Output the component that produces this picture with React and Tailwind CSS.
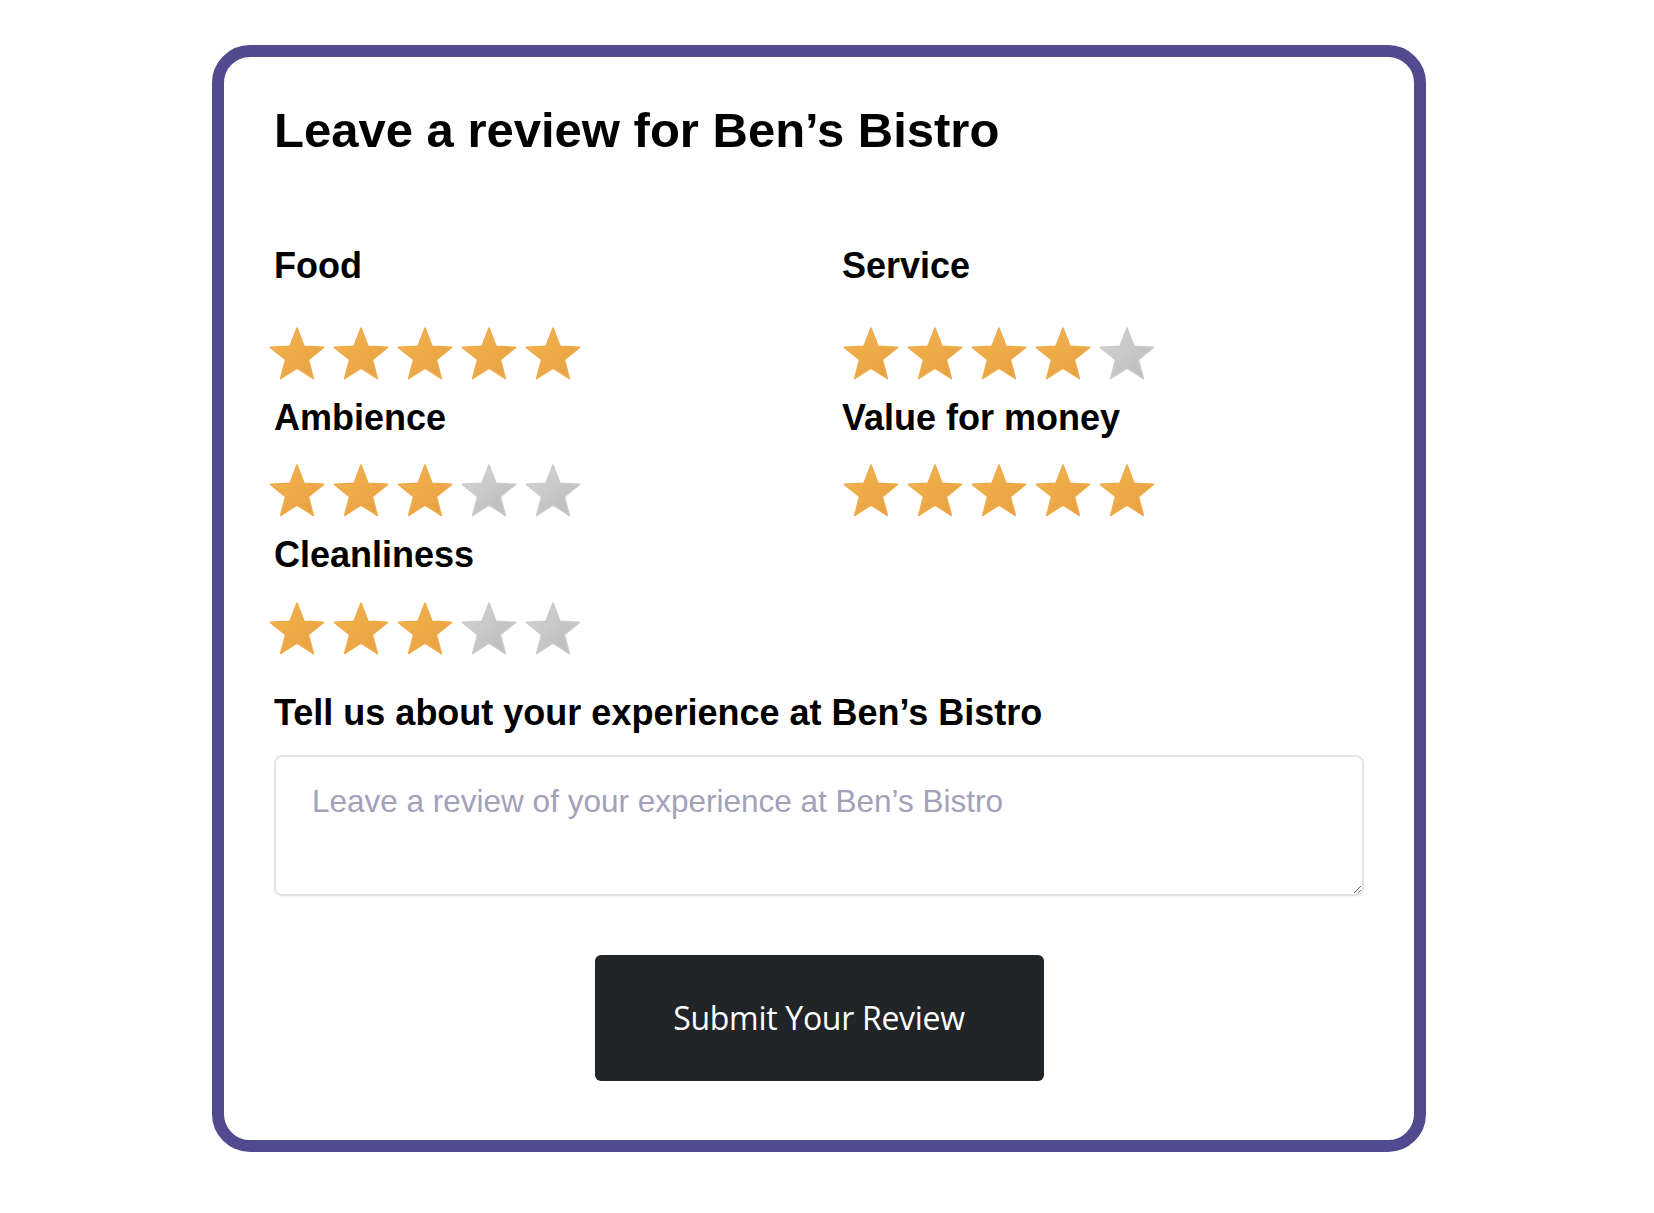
import React from "react";

const STAR = "28,1 35.05,19.29 54.63,20.35 39.41,32.71 44.46,51.65 28,41 11.54,51.65 16.59,32.71 1.37,20.35 20.95,19.29";

const Star = ({ on }) => (
  <svg width="56" height="54" viewBox="0 0 56 54" className="shrink-0">
    <defs>
      <linearGradient id="gold" x1="0" y1="0" x2="1" y2="1">
        <stop offset="0" stopColor="#f4b650" />
        <stop offset="1" stopColor="#e69e3f" />
      </linearGradient>
      <linearGradient id="grey" x1="0" y1="0" x2="1" y2="1">
        <stop offset="0" stopColor="#d6d6d6" />
        <stop offset="1" stopColor="#b9b9b9" />
      </linearGradient>
    </defs>
    <polygon
      points={STAR}
      fill={on ? "url(#gold)" : "url(#grey)"}
      stroke={on ? "#eeaa48" : "#cacaca"}
      strokeWidth="1.5"
      strokeLinejoin="round"
    />
  </svg>
);

const Stars = ({ value, className }) => (
  <div className={"flex gap-[8px] " + className}>
    {[1, 2, 3, 4, 5].map((n) => (
      <Star key={n} on={n <= value} />
    ))}
  </div>
);

const Label = ({ children, className = "" }) => (
  <div className={"text-[36px] leading-[36px] font-bold text-black " + className}>{children}</div>
);

const App = () => {
  return (
    <div
      className="min-h-screen bg-white pt-[45px] pb-[61px]"
      style={{ fontFamily: '"Liberation Sans", Arial, sans-serif' }}
    >
      <div className="ml-[212px] w-[1214px] rounded-[38px] border-[12px] border-[#514a8e] bg-white pt-[49px] pb-[59px] pl-[50px] pr-[50px]">
        <h1 className="text-[49px] leading-[49px] font-bold text-black">Leave a review for Ben’s Bistro</h1>

        <div className="grid grid-cols-[568px_1fr] mt-[93px]">
          <div>
            <Label>Food</Label>
            <Stars value={5} className="mt-[43px] -ml-[5px]" />
          </div>
          <div>
            <Label>Service</Label>
            <Stars value={4} className="mt-[43px] ml-[1px]" />
          </div>
          <div className="mt-[19px]">
            <Label>Ambience</Label>
            <Stars value={3} className="mt-[28px] -ml-[5px]" />
          </div>
          <div className="mt-[19px]">
            <Label>Value for money</Label>
            <Stars value={5} className="mt-[28px] ml-[1px]" />
          </div>
          <div className="mt-[19px]">
            <Label>Cleanliness</Label>
            <Stars value={3} className="mt-[29px] -ml-[5px]" />
          </div>
        </div>

        <Label className="mt-[39px]">Tell us about your experience at Ben’s Bistro</Label>

        <textarea
          placeholder="Leave a review of your experience at Ben’s Bistro"
          className="mt-[24px] block w-full h-[141px] rounded-[8px] border-2 border-[#e3e3e6] pl-[36px] pr-[20px] pt-[26px] text-[31.5px] leading-[36px] text-[#333] placeholder:text-[#a3a1ba] outline-none shadow-[0_1px_2px_rgba(0,0,0,0.05)]"
        />

        <div className="flex justify-center mt-[59px]">
          <button
            className="w-[449px] h-[126px] rounded-[6px] bg-[#222528] text-white text-[32px] tracking-[-0.3px]"
            style={{ fontFamily: '"Open Sans", "Noto Sans", sans-serif' }}
          >
            Submit Your Review
          </button>
        </div>
      </div>
    </div>
  );
};

export default App;
